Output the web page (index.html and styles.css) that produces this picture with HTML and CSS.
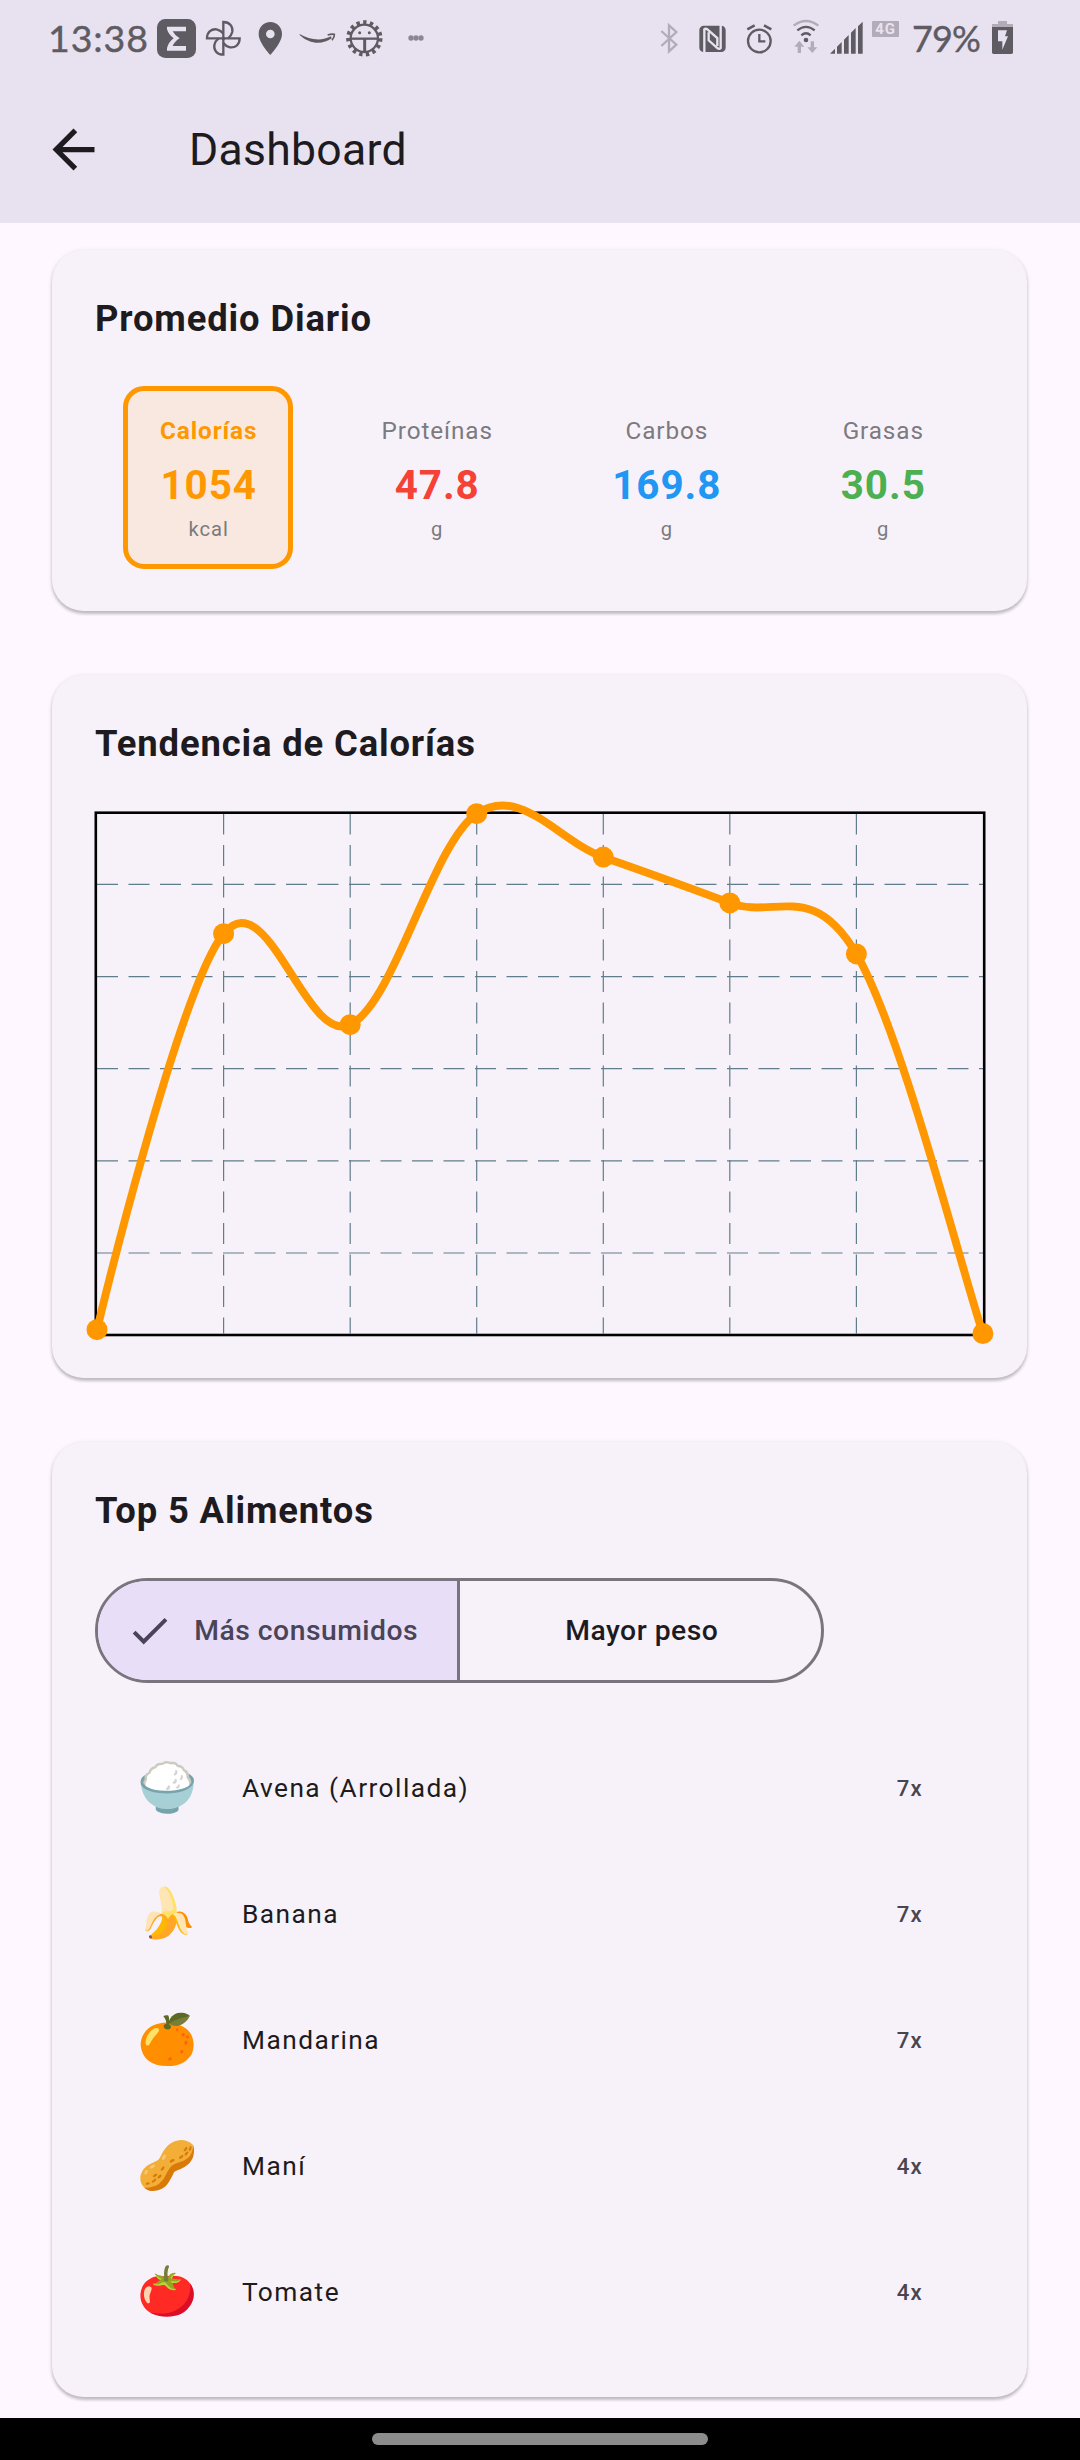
FILE: index.html
```html
<!DOCTYPE html>
<html lang="es">
<head>
<meta charset="utf-8">
<title>Dashboard</title>
<link rel="stylesheet" href="styles.css">
</head>
<body>
<div class="screen">
  <header class="top">
    <div class="status">
      <span class="clock">13:38</span>
      <svg class="st" width="43" height="75" viewBox="375 0 129 225"><rect x="381" y="57" width="117" height="117" rx="25"/><path class="cut" d="M411 80H468V94H428Q434 106 449 115Q434 124 428 138H468V152H411V144Q416 126 431 115Q416 104 411 88z"/></svg>
      <svg class="st" width="50" height="75" viewBox="504 0 150 225"><g class="line w7"><path id="blade" d="M580 119V66C600 66 609 80 607 95Q604 108 594 115"/><use href="#blade" transform="rotate(90 580 115)"/><use href="#blade" transform="rotate(180 580 115)"/><use href="#blade" transform="rotate(270 580 115)"/></g></svg>
      <svg class="st" width="42" height="75" viewBox="654 0 126 225"><path fill-rule="evenodd" d="M721 66C701 66 686 82 686 102C686 128 721 165 721 165S756 128 756 102C756 82 741 66 721 66zM721 89A13 13 0 1 1 721 115A13 13 0 1 1 721 89z"/></svg>
      <svg class="st" width="51" height="75" viewBox="780 0 153 225"><path d="M809 102C838 120 876 124 903 109L905 115C876 136 838 132 809 105z"/><path class="line w5" d="M893 105Q904 101 913 103Q914 111 906 121"/></svg>
      <svg class="st" width="47" height="75" viewBox="933 0 141 225"><circle class="line" cx="1003" cy="115" r="48" stroke-width="13" stroke-dasharray="10 10.11"/><circle class="line w7" cx="1003" cy="115" r="41"/><path class="line w7" d="M961 116H1045"/><path class="line" stroke-width="9" d="M1004 116V155"/><circle cx="989" cy="98" r="4.5"/><circle cx="1018" cy="98" r="4.5"/></svg>
      <svg class="st soft" width="52" height="75" viewBox="1074 0 156 225"><circle cx="1143" cy="114" r="8"/><circle cx="1158" cy="114" r="8"/><circle cx="1173" cy="114" r="8"/></svg>
      <span class="spacer"></span>
      <svg class="st" width="50" height="75" viewBox="0 0 150 225"><path class="line faint" stroke-width="7" d="M64 93L109 134 87 154V76L109 96 64 138"/></svg>
      <svg class="st" width="50" height="75" viewBox="150 0 150 225"><rect x="178" y="77" width="79" height="79" rx="13"/><path class="line cutline" stroke-width="7" d="M193 158V88Q197 84 203 89L232 114V138M242 74V144Q238 149 232 144L206 121V97"/></svg>
      <svg class="st" width="48" height="75" viewBox="300 0 144 225"><circle class="line w7" cx="358" cy="123" r="34"/><path class="line w7" d="M358 102V124H376"/><path class="line" stroke-width="8" d="M322 88L344 76M394 88L372 76"/></svg>
      <svg class="st" width="37" height="75" viewBox="444 0 111 225"><path class="line faint w7" d="M461 77Q498 49 535 77"/><path class="line w7" d="M472 91Q498 70 524 91M484 106Q498 94 512 106"/><circle cx="498" cy="120" r="7"/><path class="faintfill" d="M478 122L493 140H483V159H473V140H463zM517 159L502 142H512V124H522V142H532z"/></svg>
      <svg class="st" width="43" height="75" viewBox="555 0 129 225"><path d="M570 161L585 146V161zM591 140L605 126V161H591zM612 119L626 105V161H612zM633 98L647 84V161H633zM654 79L668 65V161H654z"/></svg>
      <span class="badge">4G</span>
      <span class="percent">79%</span>
      <svg class="st" width="35" height="75" viewBox="1035 0 105 225"><path class="faintfill" d="M1056 82V72H1074V63H1101V72H1119V82z"/><path d="M1056 81H1119V157Q1119 162 1114 162H1061Q1056 162 1056 157z"/><path class="cut" d="M1074 91H1101L1095 109H1104L1087 149V124H1074z"/></svg>
    </div>
    <div class="appbar">
      <svg class="back" width="63" height="63" viewBox="0 0 24 24"><path d="M20 11H7.83l5.59-5.59L12 4l-8 8 8 8 1.41-1.41L7.83 13H20v-2z"/></svg>
      <h1>Dashboard</h1>
    </div>
  </header>

  <main class="content">
    <section class="card">
      <h2>Promedio Diario</h2>
      <div class="macros">
        <div class="macro selected orange"><span class="label">Calorías</span><span class="value">1054</span><span class="unit">kcal</span></div>
        <div class="macro red"><span class="label">Proteínas</span><span class="value">47.8</span><span class="unit">g</span></div>
        <div class="macro blue"><span class="label">Carbos</span><span class="value">169.8</span><span class="unit">g</span></div>
        <div class="macro green"><span class="label">Grasas</span><span class="value">30.5</span><span class="unit">g</span></div>
      </div>
    </section>

    <section class="card">
      <h2>Tendencia de Calorías</h2>
      <svg class="chart" width="891" height="525" viewBox="95 811 891 525">
        <g class="grid">
          <path d="M97 884.4H983M97 976.6H983M97 1068.7H983M97 1160.8H983M97 1253H983"/>
          <path d="M223.6 813.6V1333.5M350.2 813.6V1333.5M476.7 813.6V1333.5M603.3 813.6V1333.5M729.8 813.6V1333.5M856.4 813.6V1333.5"/>
        </g>
        <rect class="frame" x="95.8" y="812.7" width="888.4" height="522.3"/>
        <path class="trend" d="M97 1329.7C97 1329.7 179.3 987.1 223.6 933.7C267.9 880.3 305.9 1045.7 350.2 1024.7C394.5 1003.7 432.4 843 476.7 813.7C521 784.4 559 841.5 603.3 857.1C647.6 872.7 685.5 886 729.8 902.9C774.1 919.8 812.1 878.5 856.4 953.9C900.7 1029.3 960.8 1267.1 982.9 1333.5"/>
        <g class="dots"><circle cx="97" cy="1329.7" r="10.5"/><circle cx="223.6" cy="933.7" r="10.5"/><circle cx="350.2" cy="1024.7" r="10.5"/><circle cx="476.7" cy="813.7" r="10.5"/><circle cx="603.3" cy="857.1" r="10.5"/><circle cx="729.8" cy="902.9" r="10.5"/><circle cx="856.4" cy="953.9" r="10.5"/><circle cx="982.9" cy="1333.5" r="10.5"/></g>
      </svg>
    </section>

    <section class="card">
      <h2>Top 5 Alimentos</h2>
      <div class="segmented">
        <div class="segment active"><svg class="check" width="47.25" height="47.25" viewBox="0 0 24 24"><path d="M9 16.17 4.83 12l-1.42 1.41L9 19 21 7l-1.41-1.41z"/></svg><span>Más consumidos</span></div>
        <div class="segment"><span>Mayor peso</span></div>
      </div>
      <ul class="foods">
        <li><span class="emoji">🍚</span><span class="name">Avena (Arrollada)</span><span class="count">7x</span></li>
        <li><span class="emoji">🍌</span><span class="name">Banana</span><span class="count">7x</span></li>
        <li><span class="emoji">🍊</span><span class="name">Mandarina</span><span class="count">7x</span></li>
        <li><span class="emoji">🥜</span><span class="name">Maní</span><span class="count">4x</span></li>
        <li><span class="emoji">🍅</span><span class="name">Tomate</span><span class="count">4x</span></li>
      </ul>
    </section>
  </main>

  <footer class="nav"><span class="pill"></span></footer>
</div>
</body>
</html>
```
FILE: styles.css
```css
* { box-sizing: border-box; }
body { margin: 0; font-family: Roboto, sans-serif; color: #1d1b20; }
h1, h2, ul { margin: 0; padding: 0; }
.screen { width: 1080px; height: 2460px; display: flex; flex-direction: column; background: #fef7ff; overflow: hidden; }

/* status bar and app bar */
.top { height: 223px; flex: none; background: #e8e2f0; }
.status { height: 75px; display: flex; align-items: flex-start; padding-right: 60px; color: #5f5b62; font-family: Lato, sans-serif; white-space: nowrap; }
.clock { width: 155px; padding-left: 48px; font-size: 37.5px; line-height: 76px; letter-spacing: 0.9px; -webkit-text-stroke: 0.4px #5f5b62; }
.percent { width: 80px; padding-left: 7px; font-size: 36px; line-height: 76px; letter-spacing: -0.9px; -webkit-text-stroke: 0.4px #5f5b62; }
.spacer { flex: 1; }
.st { display: block; flex: none; fill: #5f5b62; }
.st.soft { fill: #8b8790; }
.cut { fill: #e8e2f0; }
.line { fill: none; stroke: #5f5b62; }
.w5 { stroke-width: 5; }
.w7 { stroke-width: 7; }
.faint { stroke: #b2acb9; }
.faintfill { fill: #b2acb9; }
.cutline { stroke: #e8e2f0; }
.badge { width: 27px; height: 16px; margin: 21px 6px 0 4px; border-radius: 1px; background: #b2acb9; color: #e8e2f0; font: 700 15px/17px Roboto, sans-serif; letter-spacing: 0.8px; text-align: center; }
.appbar { height: 148px; display: flex; align-items: center; padding-left: 42px; }
.back { fill: #1d1b20; }
h1 { margin-left: 84px; padding-top: 2px; font-size: 44.5px; font-weight: 400; line-height: 56px; letter-spacing: 0.3px; }

/* cards */
.content { flex: 1; min-height: 0; padding: 27px 53px 0 52px; display: flex; flex-direction: column; gap: 64px; }
.card { flex: none; padding: 41px 42px 42px 43px; border-radius: 31.5px; background: #f7f2fa; box-shadow: 0 2.5px 3px rgba(0, 0, 0, 0.2), 0 1px 5px rgba(0, 0, 0, 0.1); }
h2 { margin-bottom: 40px; font-size: 36.4px; font-weight: 700; line-height: 55px; letter-spacing: 0.86px; }

.macros { height: 183px; display: flex; justify-content: space-around; align-items: center; }
.macro { display: flex; flex-direction: column; align-items: center; padding: 0 31px 1px 32px; }
.selected { width: 170px; height: 183px; padding: 22px 0 20px 1px; border: 5.25px solid #ff9800; border-radius: 21px; background: #f8e8e0; }
.label { color: #7c7a7e; font-size: 24.3px; line-height: 36px; letter-spacing: 0.9px; margin-bottom: 7px; }
.value { font-size: 40.4px; font-weight: 700; line-height: 60px; letter-spacing: 0.95px; }
.unit { color: #7c7a7e; font-size: 20.2px; line-height: 26px; letter-spacing: 0.97px; }
.selected .label { color: #ff9800; font-weight: 700; }
.orange .value { color: #ff9800; }
.red .value { color: #f44336; }
.blue .value { color: #2196f3; }
.green .value { color: #4caf50; }

/* line chart */
.chart { display: block; overflow: visible; }
.grid { fill: none; stroke: #607d8b; stroke-width: 1.2; stroke-dasharray: 21 10.5; }
.frame { fill: none; stroke: #000; stroke-width: 2.6; }
.trend { fill: none; stroke: #ff9800; stroke-width: 7.9; }
.dots { fill: #ff9800; }

/* segmented button */
.segmented { width: 729px; height: 105px; display: flex; margin-bottom: 42px; border: 3px solid #79747e; border-radius: 53px; overflow: hidden; font-size: 28.3px; font-weight: 500; letter-spacing: 0.5px; }
.segment { width: 50%; flex: none; display: flex; align-items: center; justify-content: center; padding-left: 3px; }
.segment.active { justify-content: flex-start; gap: 21px; padding-left: 28px; border-right: 3px solid #79747e; background: #e8def8; color: #4a4458; }
.check { fill: #4a4458; flex: none; }

.foods { list-style: none; }
.foods li { height: 126px; display: flex; align-items: center; padding: 0 62px 0 42px; }
.emoji { width: 105px; font-size: 48.5px; line-height: 60px; }
.name { flex: 1; font-size: 26.3px; letter-spacing: 1.45px; }
.count { color: #49454f; font-size: 22.2px; font-weight: 500; letter-spacing: 1.3px; }

.nav { height: 42px; flex: none; display: flex; justify-content: center; align-items: center; background: #000; }
.pill { width: 336px; height: 12px; border-radius: 6px; background: #8c8c8c; }
```
